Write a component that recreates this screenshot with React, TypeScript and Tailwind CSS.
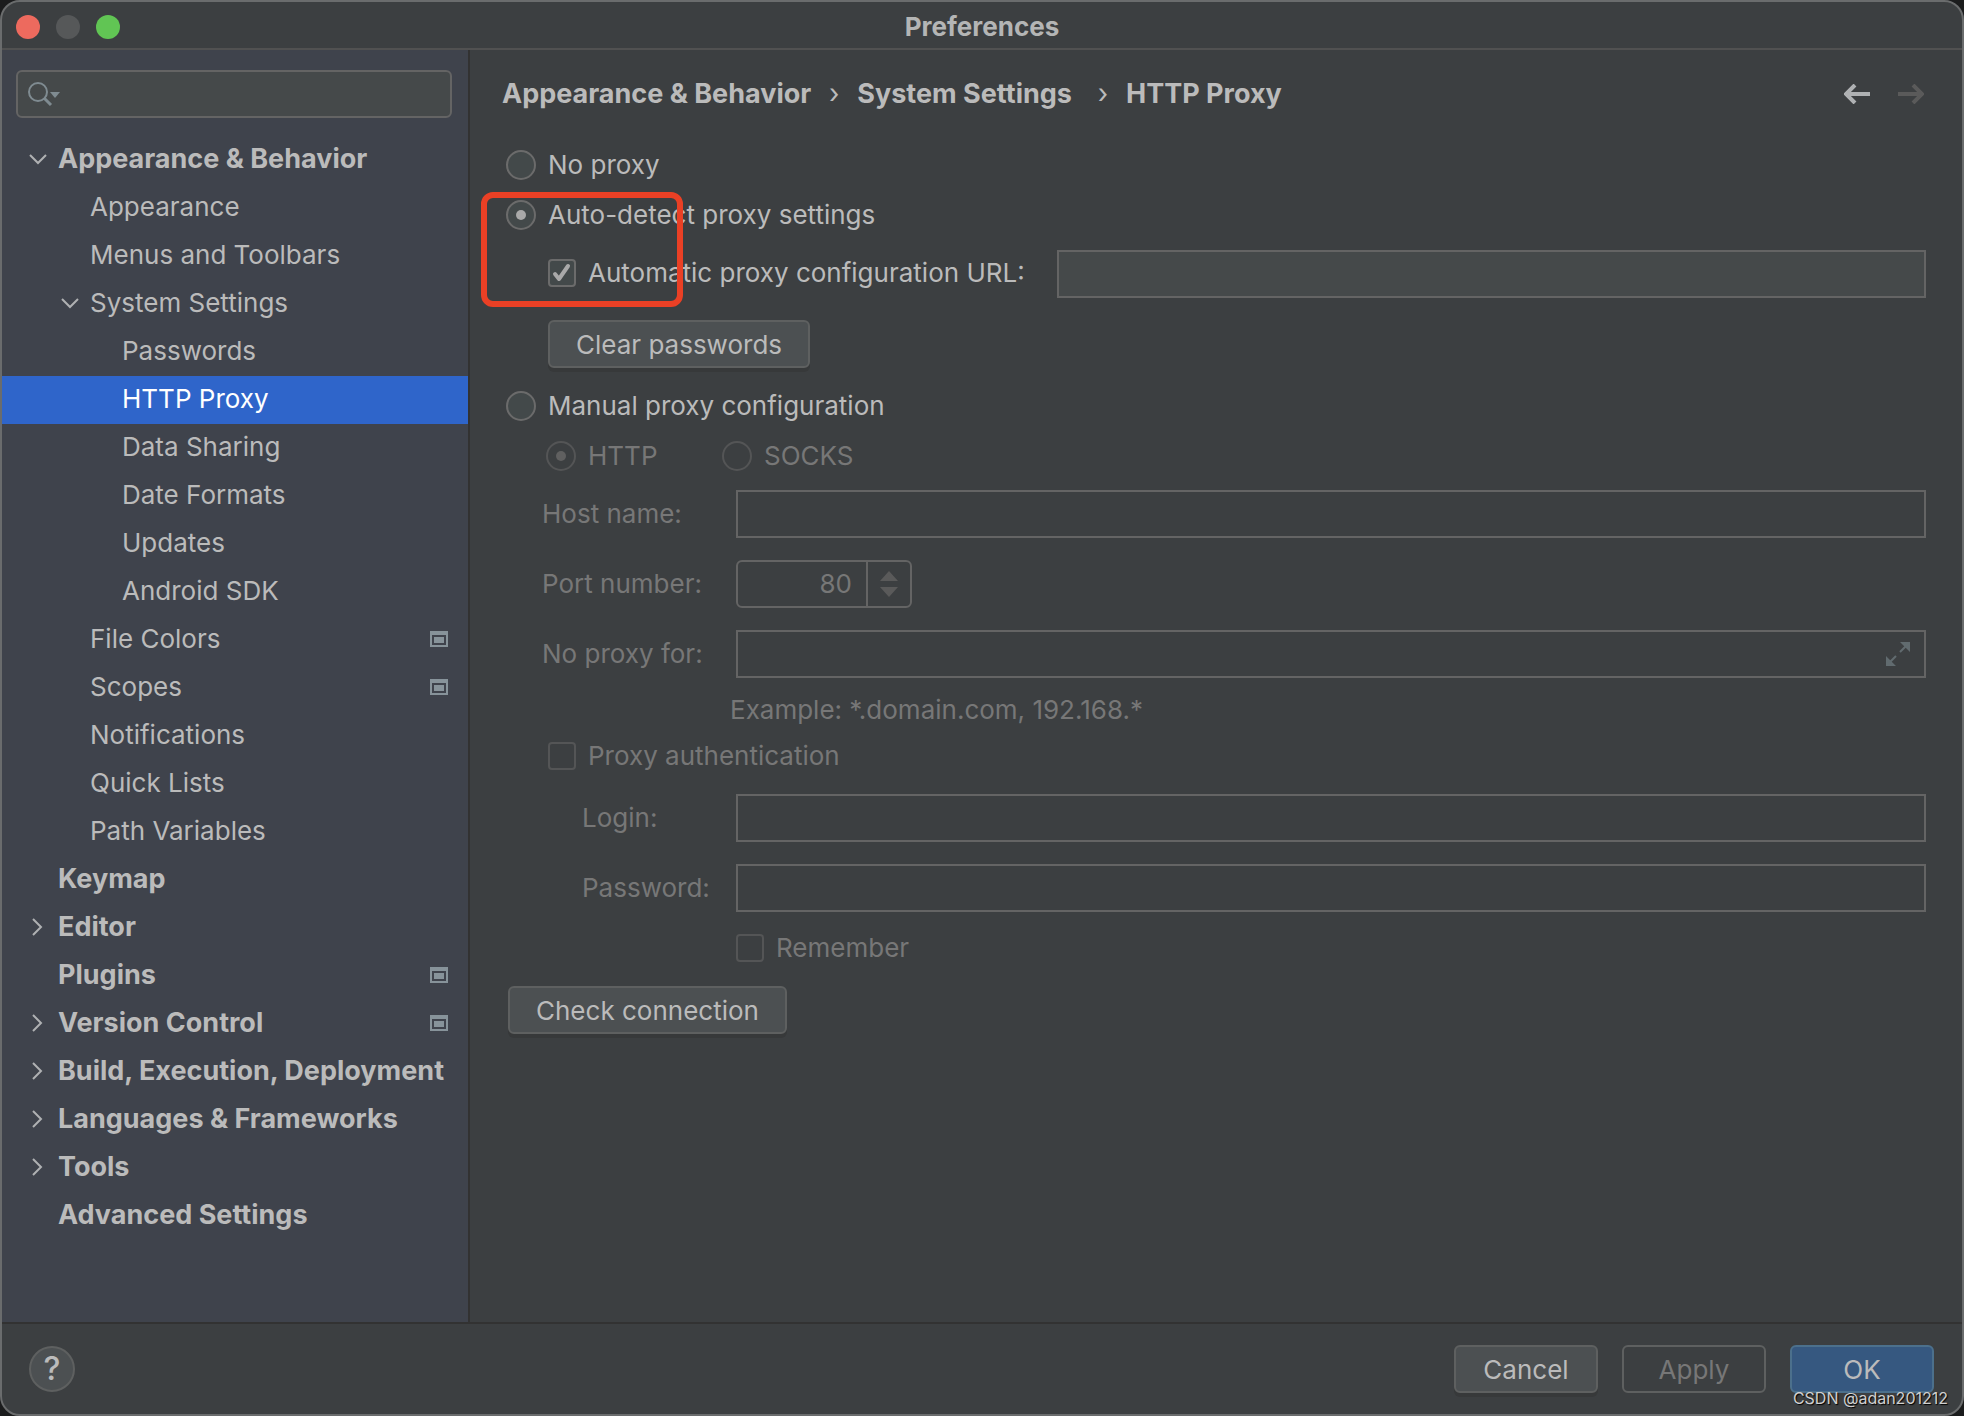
import { useState } from 'react';

type TreeItem = {
  label: string;
  level: 0 | 1 | 2;
  arrow?: 'open' | 'closed';
  project?: boolean;
};

const treeItems: TreeItem[] = [
  { label: 'Appearance & Behavior', level: 0, arrow: 'open' },
  { label: 'Appearance', level: 1 },
  { label: 'Menus and Toolbars', level: 1 },
  { label: 'System Settings', level: 1, arrow: 'open' },
  { label: 'Passwords', level: 2 },
  { label: 'HTTP Proxy', level: 2 },
  { label: 'Data Sharing', level: 2 },
  { label: 'Date Formats', level: 2 },
  { label: 'Updates', level: 2 },
  { label: 'Android SDK', level: 2 },
  { label: 'File Colors', level: 1, project: true },
  { label: 'Scopes', level: 1, project: true },
  { label: 'Notifications', level: 1 },
  { label: 'Quick Lists', level: 1 },
  { label: 'Path Variables', level: 1 },
  { label: 'Keymap', level: 0 },
  { label: 'Editor', level: 0, arrow: 'closed' },
  { label: 'Plugins', level: 0, project: true },
  { label: 'Version Control', level: 0, arrow: 'closed', project: true },
  { label: 'Build, Execution, Deployment', level: 0, arrow: 'closed' },
  { label: 'Languages & Frameworks', level: 0, arrow: 'closed' },
  { label: 'Tools', level: 0, arrow: 'closed' },
  { label: 'Advanced Settings', level: 0 },
];

const levelPadding = ['pl-6', 'pl-14', 'pl-22'];

function Arrow({ kind }: { kind?: 'open' | 'closed' }) {
  return (
    <svg
      className="mr-2 h-6 w-6 shrink-0"
      viewBox="0 0 24 24"
      fill="none"
      stroke="#afb1b3"
      strokeWidth="2"
    >
      {kind === 'open' && <path d="M4 8l8 8 8-8" />}
      {kind === 'closed' && <path d="M7 4l8 8-8 8" />}
    </svg>
  );
}

function ProjectIcon() {
  return (
    <svg className="ml-auto h-4 w-[18px] shrink-0" viewBox="0 0 18 16">
      <path
        fill="#87939a"
        fillRule="evenodd"
        d="M0 0h18v16H0zM2 4v10h14V4zM4 6h10v6H4z"
      />
    </svg>
  );
}

function Sidebar() {
  const [selected, setSelected] = useState('HTTP Proxy');

  return (
    <aside className="w-[468px] shrink-0 border-r-2 border-[#323232] bg-[#3f434c]">
      <div className="relative mt-5 mr-4 ml-3.5">
        <input
          type="text"
          aria-label="Search settings"
          className="
            block h-12 w-full rounded-md border-2 border-[#646464]
            bg-[#45494a] pl-12 outline-none
          "
        />
        <svg
          className="pointer-events-none absolute top-2 left-2 h-8 w-9"
          viewBox="0 0 36 32"
        >
          <circle
            cx="14"
            cy="14"
            r="9"
            fill="none"
            stroke="#7f8b91"
            strokeWidth="2"
          />
          <path d="M20 20l7 7" stroke="#7f8b91" strokeWidth="3" />
          <path d="M26 14h10l-5 6z" fill="#7f8b91" />
        </svg>
      </div>

      <ul className="mt-[18px]">
        {treeItems.map((item) => (
          <li key={item.label}>
            <button
              type="button"
              onClick={() => setSelected(item.label)}
              className={`
                flex h-12 w-full items-center pr-5 pb-[3px] text-left
                whitespace-nowrap
                ${levelPadding[item.level]}
                ${item.level === 0 ? 'text-[27px] font-bold' : ''}
                ${selected === item.label ? 'bg-[#2f65ca] text-white' : ''}
              `}
            >
              {item.level < 2 && <Arrow kind={item.arrow} />}
              <span className={item.level === 2 ? 'pl-8' : ''}>
                {item.label}
              </span>
              {item.project && <ProjectIcon />}
            </button>
          </li>
        ))}
      </ul>
    </aside>
  );
}

type ChoiceProps = {
  label: string;
  name?: string;
  checked?: boolean;
  disabled?: boolean;
  onChange?: () => void;
};

function Radio({ label, name, checked, disabled, onChange }: ChoiceProps) {
  return (
    <label
      className={`flex items-center gap-3 ${disabled ? 'text-[#777777]' : ''}`}
    >
      <input
        type="radio"
        name={name}
        checked={checked}
        disabled={disabled}
        onChange={onChange}
        className="
          grid size-[30px] appearance-none place-content-center rounded-full
          border-2 border-[#6b6b6b] bg-[#43494a] before:size-2.5
          before:rounded-full checked:before:bg-[#a9a9a9]
          disabled:border-[#545556] disabled:bg-transparent
          disabled:checked:before:bg-[#606060]
        "
      />
      {label}
    </label>
  );
}

function Checkbox({ label, checked, disabled, onChange }: ChoiceProps) {
  return (
    <label
      className={`
        flex items-center gap-3 pb-0.5 ${disabled ? 'text-[#777777]' : ''}
      `}
    >
      <span className="relative size-7">
        <input
          type="checkbox"
          checked={checked}
          disabled={disabled}
          onChange={onChange}
          className="
            block size-7 appearance-none rounded-sm border-2 border-[#6b6b6b]
            bg-[#43494a] disabled:border-[#545556] disabled:bg-transparent
          "
        />
        {checked && (
          <svg
            className="pointer-events-none absolute inset-0"
            viewBox="0 0 28 28"
            fill="none"
            stroke="#a9a9a9"
            strokeWidth="4"
            strokeLinecap="round"
            strokeLinejoin="round"
          >
            <path d="M7 15l4 5 9-13" />
          </svg>
        )}
      </span>
      {label}
    </label>
  );
}

const buttonClass = `
  h-12 rounded-md border-2 border-[#5e6060] bg-[#4c5052] pt-0.5
  shadow-[0_4px_0_#37393a]
`;

const fieldClass =
  'block h-12 w-full min-w-0 border-2 border-[#646464] px-3 outline-none';

function ProxyForm() {
  const [mode, setMode] = useState('auto');
  const [useUrl, setUseUrl] = useState(true);

  return (
    <form className="flex flex-col items-start px-9">
      <Radio
        name="mode"
        label="No proxy"
        checked={mode === 'none'}
        onChange={() => setMode('none')}
      />

      <div className="relative mt-[18px] w-full">
        <Radio
          name="mode"
          label="Auto-detect proxy settings"
          checked={mode === 'auto'}
          onChange={() => setMode('auto')}
        />
        <div className="mt-[19px] flex items-center gap-8 pl-[42px]">
          <Checkbox
            label="Automatic proxy configuration URL:"
            checked={useUrl}
            onChange={() => setUseUrl(!useUrl)}
          />
          <input
            type="text"
            aria-label="Proxy configuration URL"
            className="h-12 min-w-0 flex-1 border-2 border-[#646464] bg-[#45494a] px-3 outline-none"
          />
        </div>
        <div className="pointer-events-none absolute -top-[7px] -left-[25px] h-[115px] w-[202px] rounded-xl border-6 border-[#ea4025]" />
      </div>

      <button
        type="button"
        className={`${buttonClass} mt-[22px] ml-[42px] px-[26px]`}
      >
        Clear passwords
      </button>

      <div className="mt-[22px]">
        <Radio
          name="mode"
          label="Manual proxy configuration"
          checked={mode === 'manual'}
          onChange={() => setMode('manual')}
        />
      </div>

      <div className="mt-[18px] flex pl-10">
        <div className="w-44">
          <Radio name="type" label="HTTP" checked disabled />
        </div>
        <Radio name="type" label="SOCKS" disabled />
      </div>

      <div className="mt-[18px] grid w-full grid-cols-[194px_1fr] items-center gap-y-[22px] pl-9 text-[#777777]">
        <label htmlFor="host">Host name:</label>
        <input id="host" type="text" disabled className={fieldClass} />

        <label htmlFor="port">Port number:</label>
        <div className="flex h-12 w-44 rounded-md border-2 border-[#646464]">
          <input
            id="port"
            type="text"
            defaultValue="80"
            disabled
            className="w-32 min-w-0 pr-3.5 text-right outline-none"
          />
          <div className="grid flex-1 place-content-center border-l-2 border-[#646464]">
            <svg className="h-7 w-[18px]" viewBox="0 0 18 28" fill="#5a5a5a">
              <path d="M9 1l9 10H0zM0 17h18l-9 10z" />
            </svg>
          </div>
        </div>

        <label htmlFor="exclude">No proxy for:</label>
        <div className="relative">
          <input id="exclude" type="text" disabled className={fieldClass} />
          <svg
            className="absolute top-3 right-4 size-6"
            viewBox="0 0 24 24"
            fill="#616b6f"
          >
            <path d="M14 0h10v10zM0 14v10h10z" />
            <path d="M20 4l-6 6M4 20l6-6" stroke="#616b6f" strokeWidth="2" />
          </svg>
        </div>
      </div>

      <p className="mt-4 pl-56 text-[#777777]">
        Example: *.domain.com, 192.168.*
      </p>

      <div className="mt-3.5 pl-[42px]">
        <Checkbox label="Proxy authentication" disabled />
      </div>

      <div className="mt-5 grid w-full grid-cols-[154px_1fr] items-center gap-y-[22px] pl-[76px] text-[#777777]">
        <label htmlFor="login">Login:</label>
        <input id="login" type="text" disabled className={fieldClass} />
        <label htmlFor="password">Password:</label>
        <input id="password" type="password" disabled className={fieldClass} />
      </div>

      <div className="mt-5 pl-[230px]">
        <Checkbox label="Remember" disabled />
      </div>

      <button
        type="button"
        className={`${buttonClass} mt-5 ml-0.5 px-[26px]`}
      >
        Check connection
      </button>
    </form>
  );
}

function NavArrow({ label, disabled }: { label: string; disabled?: boolean }) {
  return (
    <button type="button" aria-label={label} disabled={disabled}>
      <svg
        className="h-5 w-[26px]"
        viewBox="0 0 26 20"
        fill="none"
        stroke={disabled ? '#5a5a5a' : '#afb1b3'}
        strokeWidth="4"
      >
        {disabled ? (
          <path d="M0 10h23M15 1l9 9-9 9" />
        ) : (
          <path d="M26 10H3M11 1l-9 9 9 9" />
        )}
      </svg>
    </button>
  );
}

function Crumbs() {
  return (
    <nav className="flex items-center pr-[38px] pl-8 text-[27px] font-bold">
      <span>Appearance &amp; Behavior</span>
      <span className="w-[46px] text-center font-normal">›</span>
      <span>System Settings</span>
      <span className="w-[54px] pl-2 text-center font-normal">›</span>
      <span>HTTP Proxy</span>
      <div className="ml-auto flex gap-7">
        <NavArrow label="Back" />
        <NavArrow label="Forward" disabled />
      </div>
    </nav>
  );
}

export default function App() {
  return (
    <div className="min-h-screen bg-[#1b1c1d]">
      <div
        className="
          relative flex min-h-screen flex-col overflow-hidden rounded-[20px]
          border-2 border-[#6a6c6d] bg-[#3c3f41] font-['Inter',sans-serif]
          text-[26px] leading-8 text-[#bbbbbb]
        "
      >
        <header className="relative flex h-12 items-center justify-center border-b-2 border-[#515151] pt-1 font-bold text-[#b4b5b5]">
          <div className="absolute left-3.5 flex gap-4">
            <span className="size-6 rounded-full bg-[#ed6a5e]" />
            <span className="size-6 rounded-full bg-[#565859]" />
            <span className="size-6 rounded-full bg-[#61c554]" />
          </div>
          <h1>Preferences</h1>
        </header>

        <div className="flex flex-1">
          <Sidebar />
          <main className="min-w-0 flex-1 pt-7">
            <Crumbs />
            <div className="mt-[39px]">
              <ProxyForm />
            </div>
          </main>
        </div>

        <footer className="flex h-[92px] items-center gap-6 border-t-2 border-[#323232] pr-7 pl-[27px]">
          <button
            type="button"
            aria-label="Help"
            className="mr-auto size-[46px] rounded-full border-2 border-[#5e6060] bg-[#4c5052] text-[32px] font-medium"
          >
            ?
          </button>
          <button type="button" className={`${buttonClass} w-36`}>
            Cancel
          </button>
          <button
            type="button"
            disabled
            className="h-12 w-36 rounded-md border-2 border-[#5e6060] pt-0.5 text-[#777777]"
          >
            Apply
          </button>
          <button
            type="button"
            className="h-12 w-36 rounded-md border-2 border-[#4c708c] bg-[#365880] pt-0.5"
          >
            OK
          </button>
        </footer>

        <p className="absolute right-3.5 bottom-1.5 text-base leading-5 text-[#d0d0d0] [text-shadow:1px_1px_1px_#000]">
          CSDN @adan201212
        </p>
      </div>
    </div>
  );
}
